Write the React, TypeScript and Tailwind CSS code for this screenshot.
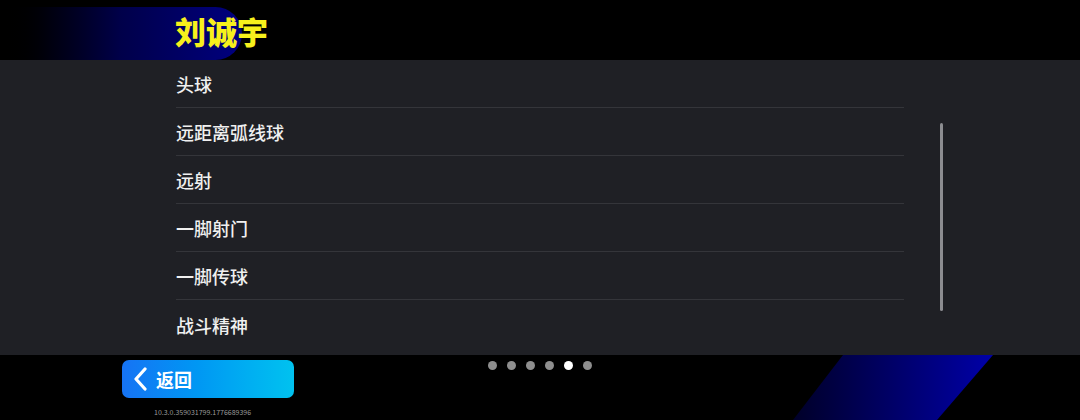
const skills = ["头球", "远距离弧线球", "远射", "一脚射门", "一脚传球", "战斗精神"];

export default function App() {
  const active = 4;
  return (
    <div
      className="relative w-[1080px] h-[420px] overflow-hidden bg-black text-white"
      style={{ fontFamily: '"Noto Sans CJK SC", "Noto Sans", sans-serif' }}
    >
      {/* decorative stripes */}
      <div className="absolute left-0 top-[7px] h-[53px] w-[242px] rounded-r-[28px] bg-gradient-to-r from-black via-[#00004a] to-[#000080]" />
      <svg className="absolute left-0 top-0" width="1080" height="420">
        <defs>
          <linearGradient id="stripe" x1="0" x2="1" y1="0" y2="0">
            <stop offset="0" stopColor="#000028" />
            <stop offset="1" stopColor="#0000a8" />
          </linearGradient>
        </defs>
        <polygon points="843,355 993,355 937,420 793,420" fill="url(#stripe)" />
      </svg>

      <div className="relative flex flex-col">
        <header className="h-[60px] pl-[175px] flex items-center">
          <h1 className="text-[31px] font-black text-[#f7f01c] leading-none">刘诚宇</h1>
        </header>

        <section className="h-[295px] bg-[#1f2025] relative">
          <ul className="ml-[176px] w-[728px]">
            {skills.map((s, i) => (
              <li
                key={s}
                className={`h-[48px] flex items-center pt-[2px] text-[18px] font-medium text-[#f0f0f0] ${
                  i < skills.length - 1 ? "border-b border-[#34353a]" : ""
                }`}
              >
                {s}
              </li>
            ))}
          </ul>
          <div className="absolute left-[940px] top-[63px] w-[3px] h-[188px] rounded-full bg-[#8c8d91]" />
        </section>

        <footer className="relative h-[65px]">
          <div className="absolute left-[488px] top-[6px] flex gap-[10px]">
            {[0, 1, 2, 3, 4, 5].map((d) => (
              <span
                key={d}
                className={`w-[9px] h-[9px] rounded-full ${d === active ? "bg-white" : "bg-[#8e8e8e]"}`}
              />
            ))}
          </div>
          <button className="absolute left-[122px] top-[5px] w-[172px] h-[38px] rounded-[7px] bg-gradient-to-r from-[#1673f4] to-[#01c2ef] flex items-center pl-[11px] gap-[9px]">
            <svg width="14" height="24" viewBox="0 0 14 24" className="text-white">
              <polyline
                points="12,2 3,12 12,22"
                fill="none"
                stroke="currentColor"
                strokeWidth="3.2"
                strokeLinecap="round"
                strokeLinejoin="round"
              />
            </svg>
            <span className="text-[18px] font-bold text-white">返回</span>
          </button>
          <div className="absolute left-[154px] top-[54px] text-[7px] text-[#9a9a9a] leading-none">
            10.3.0.359031799.1776689396
          </div>
        </footer>
      </div>
    </div>
  );
}
